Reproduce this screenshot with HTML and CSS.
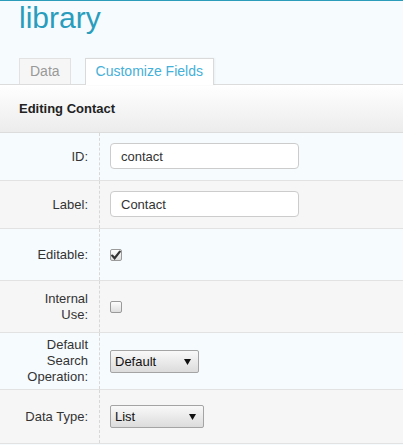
FILE: index.html
```html
<!DOCTYPE html>
<html>
<head>
<meta charset="utf-8">
<link rel="stylesheet" href="styles.css">
</head>
<body>
<div class="page">
  <h1 class="title">library</h1>
  <div class="tabs">
    <a class="tab">Data</a>
    <a class="tab tab-active">Customize Fields</a>
  </div>
  <div class="panel-head">Editing Contact</div>
  <div class="form">
    <div class="row row-blue">
      <label class="lbl">ID:</label>
      <div class="val"><input class="text" type="text" value="contact"></div>
    </div>
    <div class="row row-gray">
      <label class="lbl">Label:</label>
      <div class="val"><input class="text" type="text" value="Contact"></div>
    </div>
    <div class="row row-blue row-check">
      <label class="lbl">Editable:</label>
      <div class="val"><input class="check" type="checkbox" checked></div>
    </div>
    <div class="row row-gray row-check">
      <label class="lbl">Internal Use:</label>
      <div class="val"><input class="check" type="checkbox"></div>
    </div>
    <div class="row row-blue row-select">
      <label class="lbl">Default Search Operation:</label>
      <div class="val">
        <span class="sel sel-op"><select><option>Default</option></select><svg class="arrow" width="7" height="6" viewBox="0 0 7 6"><path d="M0 0h7L3.5 6z" fill="#111"/></svg></span>
      </div>
    </div>
    <div class="row row-gray row-select">
      <label class="lbl">Data Type:</label>
      <div class="val">
        <span class="sel sel-type"><select><option>List</option></select><svg class="arrow" width="7" height="6" viewBox="0 0 7 6"><path d="M0 0h7L3.5 6z" fill="#111"/></svg></span>
      </div>
    </div>
  </div>
</div>
</body>
</html>
```

FILE: styles.css
```css
html, body {
  margin: 0;
  padding: 0;
  background: #f6fbfe;
  font-family: "Liberation Sans", Arial, sans-serif;
  font-size: 13px;
  color: #333;
}
.page {
  border-top: 1px solid #2b9dbb;
}
.title {
  margin: 0;
  padding-left: 19px;
  font-size: 30px;
  line-height: 34px;
  font-weight: normal;
  color: #2a9dbd;
}
.tabs {
  display: flex;
  align-items: flex-end;
  gap: 14px;
  margin-top: 23px;
  padding-left: 19px;
  border-bottom: 1px solid #dcdcdc;
}
.tab {
  display: block;
  padding: 0 10px;
  line-height: 25px;
  font-size: 14px;
  border: 1px solid #e2e2e2;
  border-bottom: none;
  background: #f6f6f6;
  color: #999;
}
.tab-active {
  background: #fff;
  color: #45b0d8;
  border-color: #dadada;
  padding-bottom: 1px;
  margin-bottom: -1px;
  box-shadow: 1px 0 2px rgba(0,0,0,0.05);
}
.panel-head {
  height: 47px;
  line-height: 48px;
  padding-left: 19px;
  font-weight: bold;
  color: #222;
  background: linear-gradient(#ffffff, #ececec);
  border-bottom: 1px solid #dcdcdc;
}
.row {
  display: flex;
  min-height: 47px;
  border-bottom: 1px solid #e2e2e2;
}
.row-blue { background: #f6fbfe; }
.row-gray { background: #f6f6f6; }
.row-check { min-height: 51px; }
.row-select { min-height: 53px; }
.lbl {
  box-sizing: border-box;
  width: 99px;
  flex: none;
  padding: 4px 11px 4px 24px;
  text-align: right;
  line-height: 16px;
  display: flex;
  align-items: center;
  justify-content: flex-end;
}
.val {
  flex: 1;
  border-left: 1px dashed #d8d8d8;
  padding-left: 10px;
  display: flex;
  align-items: center;
}
.text {
  box-sizing: border-box;
  width: 189px;
  height: 26px;
  margin: 0 0 1px 0;
  padding: 0 10px;
  border: 1px solid #cccccc;
  border-radius: 4px;
  background: #fff;
  font-family: "Liberation Sans", Arial, sans-serif;
  font-size: 13px;
  color: #333;
  outline: none;
}
.check {
  -webkit-appearance: none;
  appearance: none;
  box-sizing: border-box;
  width: 12px;
  height: 12px;
  margin: 0;
  border: 1px solid #9a9a9a;
  border-radius: 2px;
  background: linear-gradient(#fdfdfd, #dedede);
}
.check:checked {
  background: url("data:image/svg+xml;utf8,<svg xmlns='http://www.w3.org/2000/svg' width='10' height='10' viewBox='0 0 10 10'><path d='M1.2 5.6 L3.6 8.2 L8.8 1.6' stroke='%23333' stroke-width='2.2' fill='none' stroke-linecap='round'/></svg>") center / 10px 10px no-repeat, linear-gradient(#fdfdfd, #dedede);
}
.sel {
  position: relative;
  display: inline-block;
}
.sel select {
  -webkit-appearance: none;
  appearance: none;
  box-sizing: border-box;
  height: 23px;
  margin: 0;
  padding: 0 0 0 4px;
  border: 1px solid #a4a4a4;
  border-radius: 2px;
  background: linear-gradient(#f9f9f9, #dcdcdc);
  font-family: "Liberation Sans", Arial, sans-serif;
  font-size: 13px;
  color: #111;
  outline: none;
}
.sel-op select { width: 89px; }
.sel-type select { width: 94px; }
.arrow {
  position: absolute;
  right: 8px;
  top: 9px;
  pointer-events: none;
}
```
